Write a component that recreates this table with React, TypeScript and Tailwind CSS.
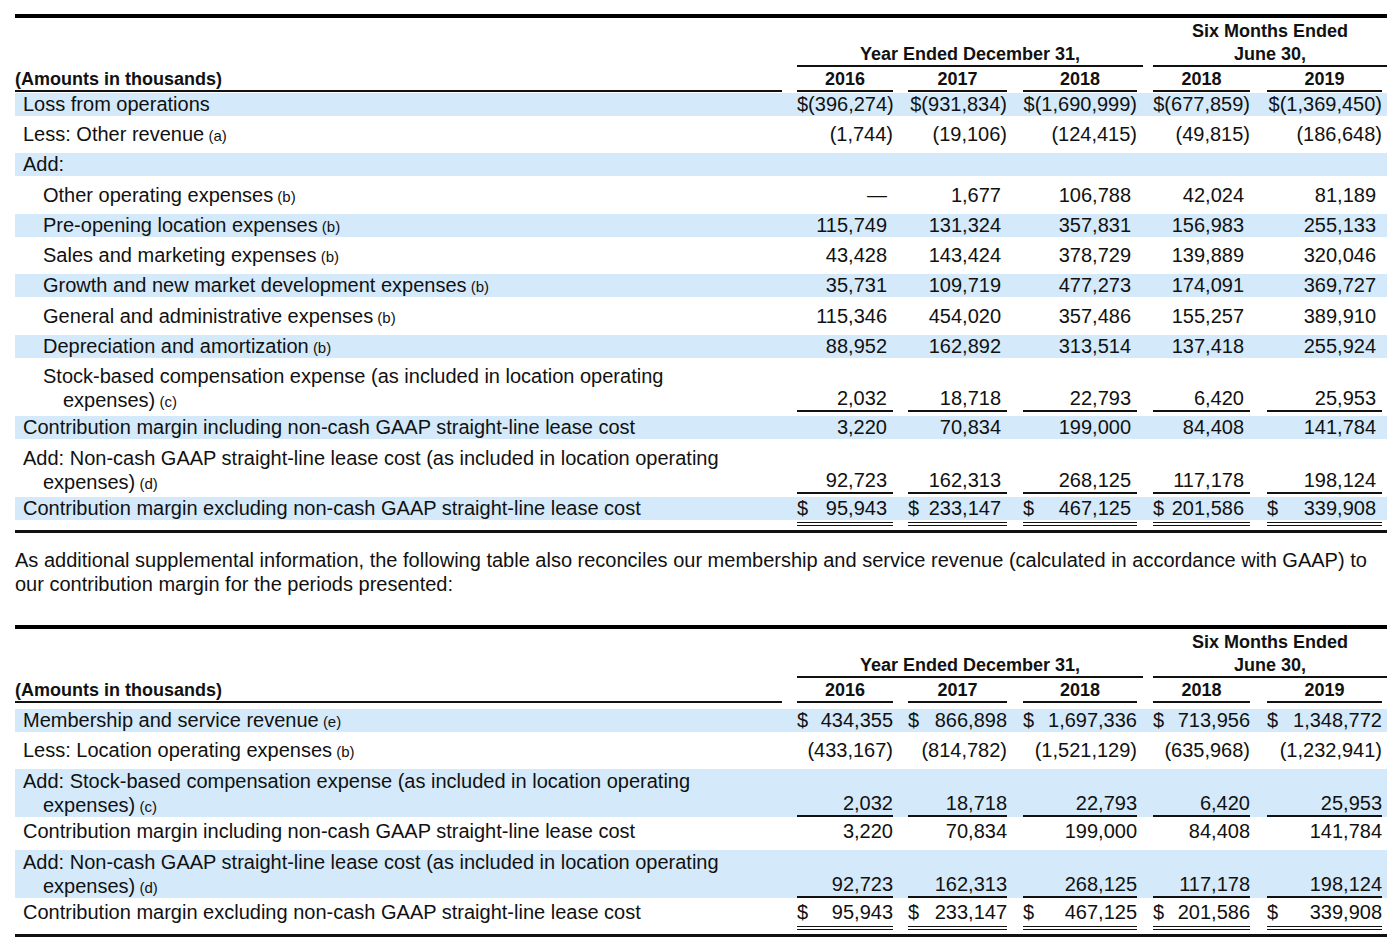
const SHADE = "bg-[#d4eafa]";

// data column boxes: left gap + inner width (96, 99, 114, 97, 115)
const CELL = [
  "w-[111px] pl-[15px]",
  "w-[114px] pl-[15px]",
  "w-[130px] pl-[16px]",
  "w-[113px] pl-[16px]",
  "w-[132px] pl-[17px]",
];

type Row = {
  label: string;
  line2?: string;
  note?: string;
  indent?: 0 | 1;
  shade?: boolean;
  vals?: string[];
  dollar?: boolean;
  underline?: boolean;
  mt?: string;
};

const first: Row[] = [
  { label: "Loss from operations", shade: true, mt: "mt-[1px]", vals: ["$(396,274)", "$(931,834)", "$(1,690,999)", "$(677,859)", "$(1,369,450)"] },
  { label: "Less: Other revenue", note: "(a)", vals: ["(1,744)", "(19,106)", "(124,415)", "(49,815)", "(186,648)"] },
  { label: "Add:", shade: true },
  { label: "Other operating expenses", note: "(b)", indent: 1, mt: "mt-[8px]", vals: ["—", "1,677", "106,788", "42,024", "81,189"] },
  { label: "Pre-opening location expenses", note: "(b)", indent: 1, shade: true, vals: ["115,749", "131,324", "357,831", "156,983", "255,133"] },
  { label: "Sales and marketing expenses", note: "(b)", indent: 1, vals: ["43,428", "143,424", "378,729", "139,889", "320,046"] },
  { label: "Growth and new market development expenses", note: "(b)", indent: 1, shade: true, vals: ["35,731", "109,719", "477,273", "174,091", "369,727"] },
  { label: "General and administrative expenses", note: "(b)", indent: 1, mt: "mt-[8px]", vals: ["115,346", "454,020", "357,486", "155,257", "389,910"] },
  { label: "Depreciation and amortization", note: "(b)", indent: 1, shade: true, vals: ["88,952", "162,892", "313,514", "137,418", "255,924"] },
  { label: "Stock-based compensation expense (as included in location operating", line2: "expenses)", note: "(c)", indent: 1, underline: true, mt: "mt-[6px]", vals: ["2,032", "18,718", "22,793", "6,420", "25,953"] },
  { label: "Contribution margin including non-cash GAAP straight-line lease cost", shade: true, mt: "mt-[4px]", vals: ["3,220", "70,834", "199,000", "84,408", "141,784"] },
  { label: "Add: Non-cash GAAP straight-line lease cost (as included in location operating", line2: "expenses)", note: "(d)", underline: true, vals: ["92,723", "162,313", "268,125", "117,178", "198,124"] },
  { label: "Contribution margin excluding non-cash GAAP straight-line lease cost", shade: true, dollar: true, mt: "mt-[3px]", vals: ["95,943", "233,147", "467,125", "201,586", "339,908"] },
];

const second: Row[] = [
  { label: "Membership and service revenue", note: "(e)", shade: true, dollar: true, mt: "mt-[6px]", vals: ["434,355", "866,898", "1,697,336", "713,956", "1,348,772"] },
  { label: "Less: Location operating expenses", note: "(b)", vals: ["(433,167)", "(814,782)", "(1,521,129)", "(635,968)", "(1,232,941)"] },
  { label: "Add: Stock-based compensation expense (as included in location operating", line2: "expenses)", note: "(c)", shade: true, underline: true, vals: ["2,032", "18,718", "22,793", "6,420", "25,953"] },
  { label: "Contribution margin including non-cash GAAP straight-line lease cost", mt: "mt-[3px]", vals: ["3,220", "70,834", "199,000", "84,408", "141,784"] },
  { label: "Add: Non-cash GAAP straight-line lease cost (as included in location operating", line2: "expenses)", note: "(d)", shade: true, underline: true, vals: ["92,723", "162,313", "268,125", "117,178", "198,124"] },
  { label: "Contribution margin excluding non-cash GAAP straight-line lease cost", dollar: true, mt: "mt-[3px]", vals: ["95,943", "233,147", "467,125", "201,586", "339,908"] },
];

function Note({ children }: { children: string }) {
  return <span className="text-[15px] leading-none"> {children}</span>;
}

function Header() {
  return (
    <div className="font-bold text-[18px] pt-[2px]">
      <div className="flex">
        <div className="flex-1" />
        <div className="w-[234px] text-center leading-[23px]">Six Months Ended</div>
      </div>
      <div className="flex">
        <div className="flex-1" />
        <div className="w-[346px] text-center leading-[22px] border-b-2 border-[#111]">Year Ended December 31,</div>
        <div className="w-[10px]" />
        <div className="w-[234px] text-center leading-[22px] border-b-2 border-[#111]">June 30,</div>
      </div>
      <div className="flex items-end mt-[1px] pr-[5px]">
        <div className="flex-1 leading-[22px] border-b-2 border-[#111]">(Amounts in thousands)</div>
        {["2016", "2017", "2018", "2018", "2019"].map((y, i) => (
          <div key={i} className={CELL[i]}>
            <div className="text-center leading-[22px] border-b-2 border-[#111]">{y}</div>
          </div>
        ))}
      </div>
    </div>
  );
}

function Value({ v, dollar, hang }: { v: string; dollar?: boolean; hang: boolean }) {
  const pad = hang && !v.endsWith(")") ? "pr-[6px]" : "";
  if (dollar) {
    return (
      <div className="flex justify-between">
        <span>$</span>
        <span className={pad}>{v}</span>
      </div>
    );
  }
  return <div className={`text-right ${pad}`}>{v}</div>;
}

function TableRow({ row, hang }: { row: Row; hang: boolean }) {
  return (
    <div className={`flex items-end pr-[5px] ${row.shade ? SHADE : ""} ${row.mt ?? "mt-[7px]"}`}>
      <div className={`flex-1 ${row.indent ? "pl-[28px]" : "pl-[8px]"}`}>
        {row.line2 ? (
          <div className="leading-[24px]">
            <div className="h-[24px] whitespace-nowrap">{row.label}</div>
            <div className="h-[24px] pl-[20px]">
              {row.line2}
              {row.note && <Note>{row.note}</Note>}
            </div>
          </div>
        ) : (
          <div className="h-[23px] leading-[23px] whitespace-nowrap">
            {row.label}
            {row.note && <Note>{row.note}</Note>}
          </div>
        )}
      </div>
      {[0, 1, 2, 3, 4].map((i) => (
        <div key={i} className={CELL[i]}>
          <div className={`leading-[23px] ${row.underline ? "border-b-2 border-[#111]" : ""}`}>
            {row.vals && <Value v={row.vals[i]} dollar={row.dollar} hang={hang} />}
          </div>
        </div>
      ))}
    </div>
  );
}

function Table({ rows, hang }: { rows: Row[]; hang: boolean }) {
  return (
    <div className="border-t-4 border-black">
      <Header />
      {rows.map((r, i) => (
        <TableRow key={i} row={r} hang={hang} />
      ))}
      <div className="flex pr-[5px] mt-[2px]">
        <div className="flex-1" />
        {[0, 1, 2, 3, 4].map((i) => (
          <div key={i} className={CELL[i]}>
            <div className="border-b-[4px] border-double border-[#111]" />
          </div>
        ))}
      </div>
      <div className="mt-[4px] border-b-[3px] border-[#111]" />
    </div>
  );
}

export default function App() {
  return (
    <div className="min-h-screen bg-white text-[#111] text-[20px] font-['Liberation_Sans',Arial,sans-serif] pt-[14px] pl-[15px]">
      <div className="w-[1372px]">
        <Table rows={first} hang={true} />
        <p className="mt-[15px] leading-[24px]">
          As additional supplemental information, the following table also reconciles our membership and service revenue
          (calculated in accordance with GAAP) to our contribution margin for the periods presented:
        </p>
        <div className="mt-[29px]">
          <Table rows={second} hang={false} />
        </div>
        <div className="mt-[7px] flex leading-[24px] text-[17px]">
          <span className="w-[45px]">(a)</span>
          <span>Relates to other revenue not related to membership and service revenue.</span>
        </div>
      </div>
    </div>
  );
}
